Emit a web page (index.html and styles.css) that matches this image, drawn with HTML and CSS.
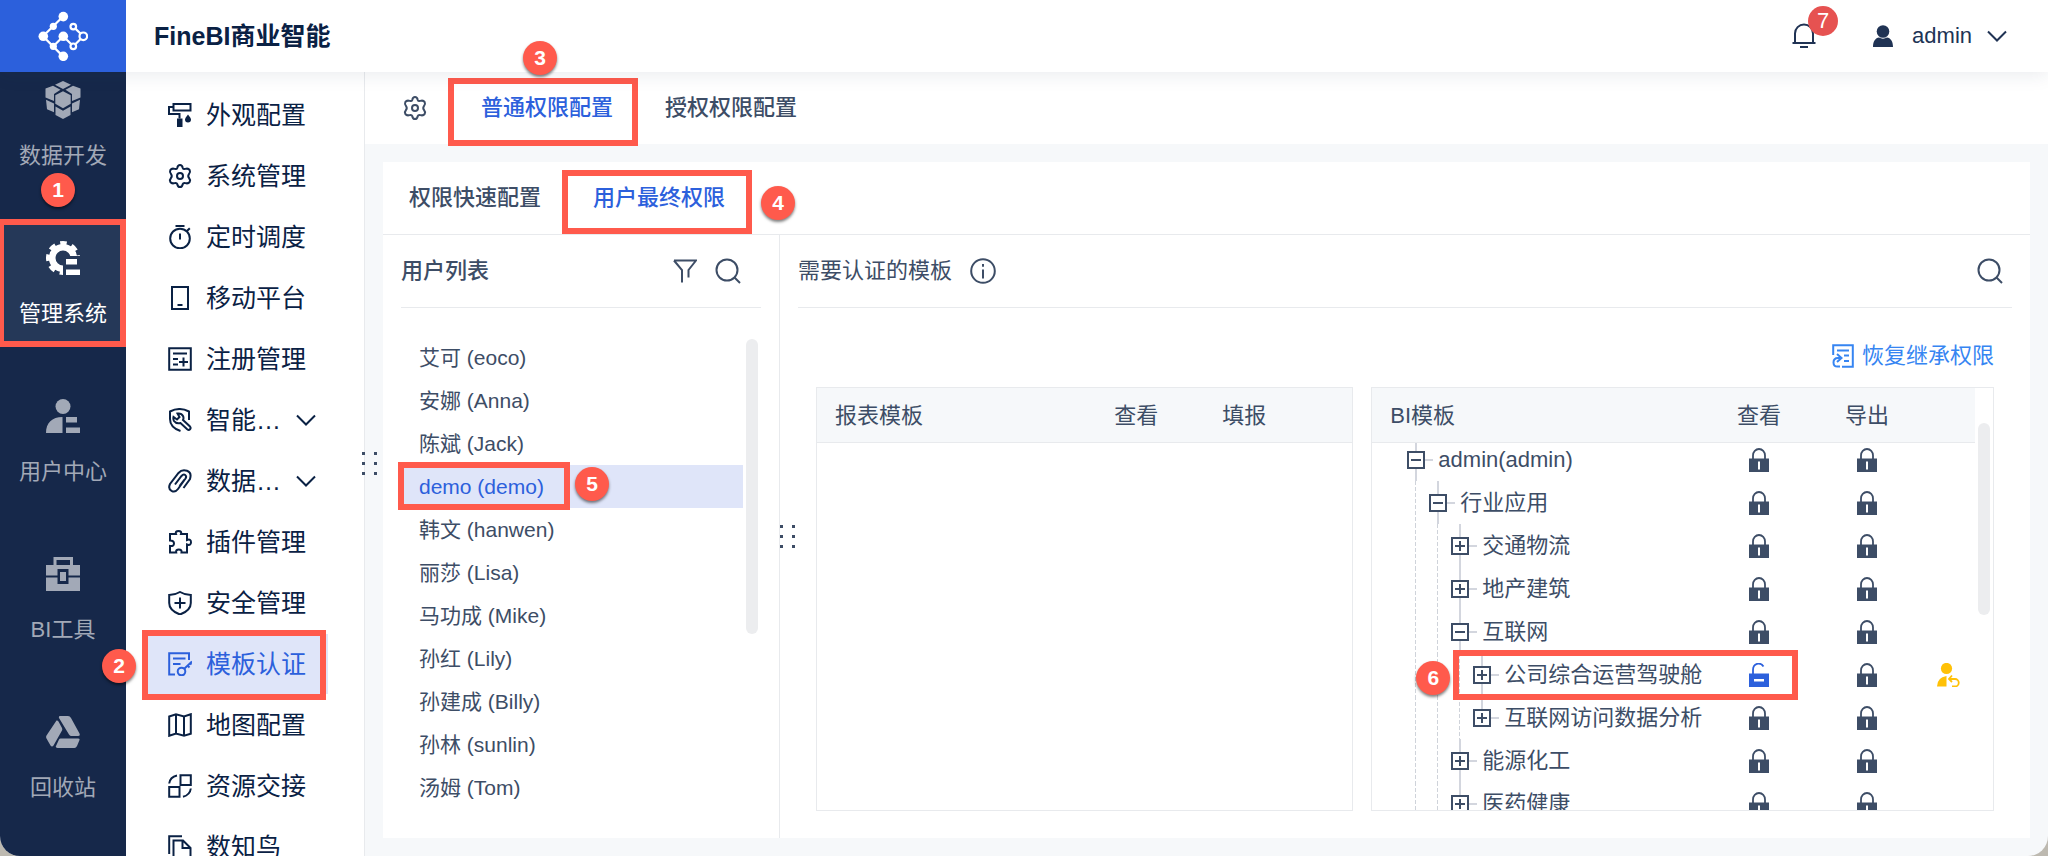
FILE: index.html
```html
<!DOCTYPE html>
<html lang="zh-CN">
<head>
<meta charset="utf-8">
<title>FineBI商业智能</title>
<link rel="stylesheet" href="styles.css">
</head>
<body>
<svg class="sprite" aria-hidden="true">
  <symbol id="gear" viewBox="0 0 24 24"><path d="M9.300 3.800Q9.800 1 12 1t2.700 2.800q.600 1.600 2.600 1.100 3-.900 4.400 1.200 1 2-.700 3.900-1.500 2 0 4 1.700 1.900.700 3.900-1.400 2.100-4.400 1.200-2-.500-2.600 1.100Q14.200 23 12 23t-2.700-2.800q-.600-1.600-2.600-1.100-3 .900-4.400-1.200-1-2 .700-3.900 1.500-2 0-4-1.700-1.900-.700-3.900 1.400-2.100 4.400-1.200 2 .500 2.600-1.100z"/><circle cx="12" cy="12" r="3"/></symbol>
  <symbol id="chevron" viewBox="0 0 20 12"><path d="M1 1.500 10 10.500 19 1.500"/></symbol>
  <symbol id="search" viewBox="0 0 26 26"><circle cx="12" cy="12" r="10.500"/><path d="M19 19l6 6"/></symbol>
  <symbol id="lock" viewBox="0 0 20 24"><path d="M4 11V7.500a6 6.500 0 0 1 12 0V11" fill="none" stroke="currentColor" stroke-width="1.800"/><path fill="currentColor" d="M0 10.500h20V24H0z"/><path fill="#fff" d="M9 13.500h2v8H9z"/></symbol>
  <symbol id="unlock" viewBox="0 0 20 24"><path d="M4 11V7C4 .500 11-1.500 14.500 3.500" fill="none" stroke="currentColor" stroke-width="1.800"/><path fill="currentColor" d="M0 10.500h20V24H0z"/><path fill="#fff" d="M5 16h10v2.500H5z"/></symbol>
</svg>

<div class="app">
  <header class="header">
    <a class="logo" href="#" aria-label="FineBI">
      <svg viewBox="0 0 50 50" width="50" height="50" fill="none" stroke="#fff" stroke-width="2.200">
        <path d="M25.300 5.300 5 25.300 25.300 45.600M15.300 35.300l10-10 10 10M35.300 15.600l10 9.700-10 10"/>
        <g fill="#fff" stroke="none"><circle cx="25.300" cy="5.600" r="4.800"/><circle cx="15.300" cy="15.300" r="3.600"/><circle cx="5.300" cy="25.300" r="4.800"/><circle cx="25.300" cy="25.300" r="4.800"/><circle cx="15.300" cy="35.300" r="3.600"/><circle cx="25.300" cy="45.300" r="4.800"/></g>
        <g fill="#2c60dc"><circle cx="35.300" cy="15.600" r="2.800"/><circle cx="45.300" cy="25.300" r="3.800"/><circle cx="35.300" cy="35.300" r="2.800"/></g>
      </svg>
    </a>
    <h1 class="brand">FineBI商业智能</h1>
    <button class="bell" type="button" aria-label="消息">
      <svg viewBox="0 0 24 26" width="24" height="26" fill="none" stroke="currentColor" stroke-width="2"><path d="M3 20V10.500a9 9 0 0 1 18 0V20M.500 20h23M8 24h8"/></svg>
      <span class="count">7</span>
    </button>
    <button class="account" type="button">
      <svg viewBox="0 0 20 22" width="20" height="22" fill="currentColor"><circle cx="10" cy="6.500" r="6.300"/><path d="M0 22c0-6 2.500-9 6-9.500 2.500 1.500 5.500 1.500 8 0 3.500.5 6 3.500 6 9.500z"/></svg>
      <span>admin</span>
      <svg class="line" width="20" height="12"><use href="#chevron"/></svg>
    </button>
  </header>

  <div class="shell">
    <nav class="rail">
      <a class="rail-item" href="#">
        <svg viewBox="0 0 36 38" width="36" height="38" fill="currentColor"><path d="M18 0l8 3.800-8 4.200-8-4.200zM.500 7.500 8 4.800l7.500 3.900-6.500 4.200v7L.500 16.500zM35.500 7.500 28 4.800l-7.500 3.900 6.500 4.200v7l8.500-3.400zM18 10.300l7.700 4v8.500L18 27.300l-7.700-4.500v-8.500zM1 18.800l8 3.700v8.800l-7-3zM35 18.800l-8 3.700v8.800l7-3zM10.500 25.500l7.500 4.300 7.500-4.300V34L18 38l-7.500-4z"/></svg>
        <span>数据开发</span>
        <b class="badge badge-rail">1</b>
      </a>
      <a class="rail-item active" href="#">
        <svg viewBox="0 0 34 34" width="34" height="34" fill="none" stroke="currentColor"><clipPath id="cut"><path d="M0 0h34v15H17v19H0z"/></clipPath><g clip-path="url(#cut)"><circle cx="17" cy="17" r="10.800" stroke-width="6.600"/><circle cx="17" cy="17" r="15" stroke-width="4" stroke-dasharray="6.500 5.280" stroke-dashoffset="3.250"/></g><path fill="currentColor" stroke="none" d="M20 18h11v5.500H20zM20 28.500h14V34H20z"/></svg>
        <span>管理系统</span>
        <i class="frame frame-rail"></i>
      </a>
      <a class="rail-item" href="#">
        <svg viewBox="0 0 34 34" width="34" height="34" fill="currentColor"><circle cx="17" cy="7.500" r="7.500"/><path d="M0 34C0 24 6 18 16.500 18v16zM20 18h11v5.500H20zM20 28.500h14V34H20z"/></svg>
        <span>用户中心</span>
      </a>
      <a class="rail-item" href="#">
        <svg viewBox="0 0 34 34" width="34" height="34" fill="currentColor"><path fill-rule="evenodd" d="M7.500 8V0H27v8h7v10.500H22.500V12h-11v6.500H0V8zm3 0H24V3H10.500zM0 20.500h11.500V27h11v-6.500H34V34H0zM14 15h6v9h-6z"/></svg>
        <span>BI工具</span>
      </a>
      <a class="rail-item" href="#">
        <svg viewBox="0 0 34 34" width="34" height="34" fill="currentColor"><path d="M14 1h8q2 0 3 2l8.500 15.500q1 2.500-1.500 2.500h-6.500q-1.500 0-2.500-1.500L13 3q-.5-2 1-2zM10.500 5.500q1-.5 2 1L16 13q.5 1.500 0 2.500L7.500 30.500q-1.500 2-3 0L.500 23.500q-.800-1.500 0-3zM14.500 23.500H32q2 0 1.500 1.500L31 31q-1 2-2.500 2H11.500q-2.500-.5-1.500-2l3-6.500q.5-1 1.500-1z"/></svg>
        <span>回收站</span>
      </a>
    </nav>

    <nav class="menu">
      <a class="menu-item" href="#"><svg viewBox="0 0 24 24"><path d="M5.500 1H22.500v6.500h-17zM5.500 4H1v7h10.500v4.500"/><path d="M9 15.500h5.500V24H9zM20 11.500q3 3.500 3 5a3 3 0 0 1-6 0q0-1.500 3-5z" fill="currentColor" stroke="none"/></svg><span>外观配置</span></a>
      <a class="menu-item" href="#"><svg><use href="#gear"/></svg><span>系统管理</span></a>
      <a class="menu-item" href="#"><svg viewBox="0 0 24 24"><circle cx="12" cy="13.500" r="9.800"/><path d="M7.500 1h9M12 8.500v6M19 6l2.800-2.800"/></svg><span>定时调度</span></a>
      <a class="menu-item" href="#"><svg viewBox="0 0 24 24"><path d="M4 1h16v22H4zM9.500 19h5"/></svg><span>移动平台</span></a>
      <a class="menu-item" href="#"><svg viewBox="0 0 24 24"><path d="M1.200 1.200h21.600v21.600H1.200zM5 6.500h14M5 12h5M5 17.500h5M11 15h9M15.500 10.500v9"/></svg><span>注册管理</span></a>
      <a class="menu-item" href="#"><svg viewBox="0 0 24 24"><path d="M21 12V3.500Q11.500-1.500 2 3.500V11q0 8.500 10.500 12M9.500 5.500q4-.500 5.500 2.500 1 2 0 4l7 6.500q1.200 1.500 0 2.800t-2.800 0L12.500 15q-4.500 1-6.500-2-1-2-.500-4l3.500 2.500 2.500-2.500z"/></svg><span>智能…</span><svg class="more"><use href="#chevron"/></svg></a>
      <a class="menu-item" href="#"><svg viewBox="0 0 24 24"><path d="M7 15.500 13.500 7q2-2.300 3.700-1t.300 3.500L10 20q-2.800 3.800-6.500 1.800T2 15L10.500 4Q14 0 19 1.800t3 8.200L15.500 19M11.500 17l5-6.500"/></svg><span>数据…</span><svg class="more"><use href="#chevron"/></svg></a>
      <a class="menu-item" href="#"><svg viewBox="0 0 24 24"><path d="M2 4H8Q7 1 10.500 1T13 4h6v6q4-1.500 4 2.200T19 14.500V22.500h-5.500q.5-3-2.700-3t-2.600 3H2V16q4 .500 4-2.500T2 10.500z"/></svg><span>插件管理</span></a>
      <a class="menu-item" href="#"><svg viewBox="0 0 24 24"><path d="M12 1q5 3 10.800 3v8q0 7.500-10.800 11.500Q1.200 19.500 1.200 12V4Q7 4 12 1zM12 6.500v11M6.500 12h11"/></svg><span>安全管理</span></a>
      <a class="menu-item active" href="#"><svg viewBox="0 0 24 24"><path d="M7 22.500H1.200V1.200H21V8M5 6.500h12.500M5 12h7.500M16.500 16.500 24 9.500M19.500 13.500l2 2M22 11l1.500 1.500"/><circle cx="13.500" cy="19.500" r="3.800"/></svg><span>模板认证</span><i class="frame frame-menu"></i><b class="badge badge-menu">2</b></a>
      <a class="menu-item" href="#"><svg viewBox="0 0 24 24"><path d="M1.200 3.500 8 1.200l8 2.300 6.800-2.300v19.500L16 22.800l-8-2.300-6.800 2.300zM8 1.200v19.300M16 3.500v19.300"/></svg><span>地图配置</span></a>
      <a class="menu-item" href="#"><svg viewBox="0 0 24 24"><path d="M12.500 1.200h10.300V11H12.500zM1.200 13h10.300v9.800H1.200zM1.200 9.500Q2 3 9 1.500M22.800 14.500Q22 21 15 22.800"/></svg><span>资源交接</span></a>
      <a class="menu-item" href="#"><svg viewBox="0 0 24 24"><path d="M1.200 19V1.200H14M5.500 23.500V5.500H15l7.500 7.500v10.500M14.500 5.500V13h8"/></svg><span>数知鸟</span></a>
      <span class="grip grip-menu"></span>
    </nav>

    <main class="content">
      <div class="topbar">
        <button class="gear" type="button" aria-label="设置"><svg width="24" height="24"><use href="#gear"/></svg></button>
        <button class="tab active" type="button">普通权限配置<i class="frame frame-top"></i><b class="badge badge-top">3</b></button>
        <button class="tab" type="button">授权权限配置</button>
      </div>

      <div class="panel">
        <div class="subtabs">
          <button class="tab" type="button">权限快速配置</button>
          <button class="tab active" type="button">用户最终权限<i class="frame frame-sub"></i><b class="badge badge-sub">4</b></button>
        </div>
        <div class="columns">
          <section class="users">
            <div class="head">
              <h2>用户列表</h2>
              <button type="button" aria-label="筛选"><svg viewBox="0 0 24 24" width="24" height="24"><path d="M1 1.500h22L15.500 11v7.500M1 1.500 9 11v12.500"/></svg></button>
              <button type="button" aria-label="搜索"><svg width="26" height="26"><use href="#search"/></svg></button>
            </div>
            <div class="users-body">
              <ul class="list">
                <li>艾可 (eoco)</li>
                <li>安娜 (Anna)</li>
                <li>陈斌 (Jack)</li>
                <li class="active">demo (demo)<i class="frame frame-user"></i><b class="badge badge-user">5</b></li>
                <li>韩文 (hanwen)</li>
                <li>丽莎 (Lisa)</li>
                <li>马功成 (Mike)</li>
                <li>孙红 (Lily)</li>
                <li>孙建成 (Billy)</li>
                <li>孙林 (sunlin)</li>
                <li>汤姆 (Tom)</li>
              </ul>
              <div class="thumb"></div>
            </div>
            <span class="grip grip-users"></span>
          </section>

          <section class="templates">
            <div class="head">
              <h2 class="regular">需要认证的模板</h2>
              <svg width="26" height="26" viewBox="0 0 26 26"><circle cx="13" cy="13" r="11.800"/><path d="M13 11.500v9M13 6v2.800"/></svg>
              <button class="push" type="button" aria-label="搜索"><svg width="26" height="26"><use href="#search"/></svg></button>
            </div>
            <div class="restore-row">
              <button class="restore" type="button">
                <svg width="22" height="24" viewBox="0 0 22 24"><path d="M1.200 11V1.200h19.600v21.600H10M5 6.500h12M12 11.500h5M12 17h5M5 10l4.500 4L5 18M9 14H6q-4.500 0-4.500 4.500T6 22.500h2"/></svg>
                恢复继承权限
              </button>
            </div>
            <div class="tables">
              <div class="box report">
                <table>
                  <thead><tr><th>报表模板</th><th>查看</th><th>填报</th><th></th></tr></thead>
                </table>
              </div>
              <div class="box bi">
                <table>
                  <thead><tr><th>BI模板</th><th>查看</th><th>导出</th><th></th></tr></thead>
                  <tbody>
                    <tr><td><span class="node"><button class="minus" type="button" aria-label="收起"></button></span>admin(admin)</td><td><svg><use href="#lock"/></svg></td><td><svg><use href="#lock"/></svg></td><td></td></tr>
                    <tr><td><span class="guide"></span><span class="node"><button class="minus" type="button" aria-label="收起"></button></span>行业应用</td><td><svg><use href="#lock"/></svg></td><td><svg><use href="#lock"/></svg></td><td></td></tr>
                    <tr><td><span class="guide"></span><span class="guide"></span><span class="node"><button class="plus" type="button" aria-label="展开"></button></span>交通物流</td><td><svg><use href="#lock"/></svg></td><td><svg><use href="#lock"/></svg></td><td></td></tr>
                    <tr><td><span class="guide"></span><span class="guide"></span><span class="node"><button class="plus" type="button" aria-label="展开"></button></span>地产建筑</td><td><svg><use href="#lock"/></svg></td><td><svg><use href="#lock"/></svg></td><td></td></tr>
                    <tr><td><span class="guide"></span><span class="guide"></span><span class="node"><button class="minus" type="button" aria-label="收起"></button></span>互联网</td><td><svg><use href="#lock"/></svg></td><td><svg><use href="#lock"/></svg></td><td></td></tr>
                    <tr><td><span class="guide"></span><span class="guide"></span><span class="guide"></span><span class="node"><button class="plus" type="button" aria-label="展开"></button></span>公司综合运营驾驶舱<i class="frame frame-row"></i><b class="badge badge-row">6</b></td><td><svg class="open"><use href="#unlock"/></svg></td><td><svg><use href="#lock"/></svg></td><td><svg class="person" viewBox="0 0 24 24"><circle cx="10.500" cy="5.500" r="5.600" fill="currentColor"/><path d="M1 23.500q0-9 9.500-10.500v10.500z" fill="currentColor"/><path d="M13.500 16H19a3.500 3.500 0 0 1 0 7.500h-3M16 12.500 13 16l3 3" fill="none" stroke="currentColor" stroke-width="1.800"/></svg></td></tr>
                    <tr><td><span class="guide"></span><span class="guide"></span><span class="guide"></span><span class="node last"><button class="plus" type="button" aria-label="展开"></button></span>互联网访问数据分析</td><td><svg><use href="#lock"/></svg></td><td><svg><use href="#lock"/></svg></td><td></td></tr>
                    <tr><td><span class="guide"></span><span class="guide"></span><span class="node"><button class="plus" type="button" aria-label="展开"></button></span>能源化工</td><td><svg><use href="#lock"/></svg></td><td><svg><use href="#lock"/></svg></td><td></td></tr>
                    <tr><td><span class="guide"></span><span class="guide"></span><span class="node"><button class="plus" type="button" aria-label="展开"></button></span>医药健康</td><td><svg><use href="#lock"/></svg></td><td><svg><use href="#lock"/></svg></td><td></td></tr>
                  </tbody>
                </table>
                <div class="thumb"></div>
              </div>
            </div>
          </section>
        </div>
      </div>
    </main>
  </div>
</div>
</body>
</html>
```
FILE: styles.css
```css
* { box-sizing: border-box; }

body {
  margin: 0;
  background: #bdb9b0;
  color: #3d4d66;
  font: 22px/30px "Liberation Sans", "Noto Sans CJK SC", sans-serif;
}

button {
  margin: 0;
  padding: 0;
  border: 0;
  background: none;
  color: inherit;
  font: inherit;
}

a { color: inherit; text-decoration: none; }
h1, h2 { margin: 0; }
svg { display: block; flex: none; }
.sprite { position: absolute; width: 0; height: 0; }

.app {
  display: flex;
  flex-direction: column;
  height: 100vh;
  overflow: hidden;
  border-radius: 0 0 20px 20px;
  background: #f6f8fa;
}

/* Header */
.header {
  position: relative;
  z-index: 2;
  display: flex;
  flex: none;
  align-items: center;
  height: 72px;
  padding-right: 41px;
  background: #fff;
  box-shadow: 0 2px 18px rgba(30, 50, 80, .1);
  color: #203354;
}

.logo {
  display: flex;
  align-items: center;
  justify-content: center;
  width: 126px;
  height: 72px;
  background: #2c60dc;
}

.brand {
  flex: 1;
  padding-left: 28px;
  color: #0a2144;
  font-size: 25px;
}

.bell { position: relative; margin-right: 57px; }

.count {
  position: absolute;
  top: -17px;
  left: 16px;
  width: 30px;
  height: 30px;
  border-radius: 50%;
  background: #e65251;
  color: #fff;
  line-height: 30px;
  text-align: center;
}

.account { display: flex; align-items: center; }
.account span { margin: 0 15px 0 19px; }
.line { fill: none; stroke: currentColor; stroke-width: 2; }

.shell { display: flex; flex: 1; min-height: 0; }

/* Module rail */
.rail {
  display: flex;
  flex: none;
  flex-direction: column;
  gap: 32px;
  width: 126px;
  background: #16284a;
  color: #a2a9b7;
}

.rail-item {
  position: relative;
  display: flex;
  flex: none;
  flex-direction: column;
  align-items: center;
  justify-content: space-between;
  height: 126px;
  padding: 21px 0 17px;
}

.rail-item:first-child { margin-top: -10px; padding-top: 19px; }
.rail-item.active { background: #253858; color: #fff; }

/* System menu */
.menu {
  position: relative;
  display: flex;
  flex: none;
  flex-direction: column;
  gap: 1px;
  width: 239px;
  padding: 13px 36px 0 20px;
  border-right: 1px solid #e8eaed;
  background: #fff;
  color: #0a2144;
  font-size: 25px;
}

.menu-item {
  position: relative;
  display: flex;
  flex: none;
  align-items: center;
  height: 60px;
  padding-left: 22px;
}

.menu-item svg {
  width: 24px;
  height: 24px;
  fill: none;
  stroke: currentColor;
  stroke-width: 2;
}

.menu-item span { margin-left: 14px; }
.menu-item .more { width: 20px; height: 12px; margin: 0 12px 0 auto; }
.menu-item.active { background: #dfe5f9; color: #2c60dc; }

/* Content */
.content { flex: 1; display: flex; flex-direction: column; min-width: 0; }

.topbar {
  display: flex;
  flex: none;
  align-items: center;
  height: 72px;
  padding-left: 38px;
  background: #fff;
}

.gear svg, .head svg {
  fill: none;
  stroke: currentColor;
  stroke-width: 2;
}

.gear { margin-right: 28px; }

.tab {
  position: relative;
  height: 72px;
  padding: 0 26px;
  font-weight: 500;
  line-height: 72px;
}

.tab.active { color: #2c60dc; }

.panel {
  display: flex;
  flex: 1;
  flex-direction: column;
  min-height: 0;
  margin: 18px;
  background: #fff;
}

.subtabs { display: flex; flex: none; height: 73px; border-bottom: 1px solid #e8eaed; }
.columns { display: flex; flex: 1; min-height: 0; }

.head {
  display: flex;
  flex: none;
  align-items: center;
  gap: 18px;
  height: 73px;
  margin: 0 18px;
  border-bottom: 1px solid #e8eaed;
}

.head h2 { font-size: 22px; font-weight: 500; }
.head h2.regular { font-weight: 400; }
.head .push { margin: 0 9px 0 auto; }

.users {
  position: relative;
  flex: none;
  width: 397px;
  border-right: 1px solid #e8eaed;
}

.users .head { padding-right: 20px; }
.users .head h2 { flex: 1; }
.users-body { display: flex; gap: 3px; padding: 28px 21px 0 18px; }

.list { flex: 1; margin: 0; padding: 0; font-size: 21px; list-style: none; }

.list li {
  position: relative;
  height: 43px;
  padding-left: 18px;
  line-height: 43px;
}

.list .active { background: #dfe5f9; color: #2c60dc; }

.thumb { width: 12px; border-radius: 6px; background: #ecedef; }
.users .thumb { height: 295px; margin-top: 3px; }

.templates { display: flex; flex: 1; flex-direction: column; min-width: 0; }

.restore-row {
  display: flex;
  flex: none;
  justify-content: flex-end;
  height: 79px;
  padding: 18px 36px 0;
}

.restore {
  display: flex;
  align-items: center;
  gap: 8px;
  height: 60px;
  color: #3685f2;
}

.restore svg { fill: none; stroke: currentColor; stroke-width: 2; }

.tables {
  display: flex;
  flex: 1;
  gap: 18px;
  min-height: 0;
  padding: 0 36px 27px;
}

.box { display: flex; min-width: 0; border: 1px solid #e8eaed; }
.report { flex: 13 1 0; }
.bi { flex: 15 1 0; gap: 3px; padding-right: 3px; }
.bi .thumb { flex: none; height: 192px; margin-top: 35px; }

table { display: flex; flex: 1; flex-direction: column; min-height: 0; }
thead { display: block; flex: none; border-bottom: 1px solid #e8eaed; background: #f6f8fa; }
tbody { display: block; flex: 1; min-height: 0; overflow: hidden; }
tr { position: relative; display: grid; grid-template-columns: 1fr 108px 108px 54px; }
th { height: 54px; padding: 0; font-weight: 400; line-height: 56px; }
th:first-child { padding-left: 18px; text-align: left; }
tbody tr:first-child { margin-top: -5px; }

td {
  display: flex;
  align-items: center;
  justify-content: center;
  height: 43px;
  padding: 0;
}

td:first-child { justify-content: flex-start; padding-left: 35px; white-space: nowrap; }
td svg { width: 20px; height: 24px; }
td .open { color: #2c60dc; }
td .person { width: 24px; color: #ffc107; }

/* Tree lines */
.guide {
  align-self: stretch;
  flex: none;
  width: 22px;
  background: repeating-linear-gradient(#cfd3da 0 4px, transparent 4px 6px) 8px 0 / 1px 100% no-repeat;
}

.node {
  display: flex;
  flex: none;
  align-items: center;
  align-self: stretch;
  width: 31px;
  background:
    linear-gradient(#d3d6de, #d3d6de) 8px 0 / 2px 100% no-repeat,
    linear-gradient(#d3d6de, #d3d6de) 18px 50% / 8px 2px no-repeat;
}

.node.last {
  background:
    linear-gradient(#d3d6de, #d3d6de) 8px 0 / 2px 50% no-repeat,
    linear-gradient(#d3d6de, #d3d6de) 18px 50% / 8px 2px no-repeat;
}

.minus, .plus {
  width: 18px;
  height: 18px;
  border: 2px solid #3d4d66;
  background: linear-gradient(#3d4d66, #3d4d66) center / 10px 2px no-repeat #fff;
}

.plus {
  background:
    linear-gradient(#3d4d66, #3d4d66) center / 10px 2px no-repeat,
    linear-gradient(#3d4d66, #3d4d66) center / 2px 10px no-repeat #fff;
}

/* Drag handles */
.grip {
  position: absolute;
  z-index: 1;
  width: 15px;
  height: 23px;
  background:
    repeating-linear-gradient(#3d4d66 0 3px, transparent 3px 10px) 0 0 / 3px 23px no-repeat,
    repeating-linear-gradient(#3d4d66 0 3px, transparent 3px 10px) 12px 0 / 3px 23px no-repeat;
}

.grip-menu { right: -13px; bottom: 381px; }
.grip-users { right: -16px; top: 290px; }

/* Step markers */
.frame {
  position: absolute;
  z-index: 1;
  border: 6px solid #ff5a4c;
  pointer-events: none;
}

.badge {
  position: absolute;
  z-index: 3;
  width: 34px;
  height: 34px;
  border-radius: 50%;
  background: #ff5a4c;
  box-shadow: 0 2px 3px rgba(0, 0, 0, .5);
  color: #fff;
  font-size: 21px;
  font-weight: 700;
  line-height: 34px;
  text-align: center;
}

.frame-rail { inset: -1px 0 -1px -2px; }
.badge-rail { top: 111px; left: 41px; }
.frame-menu { inset: -4px 2px -6px -4px; }
.badge-menu { top: 15px; left: -44px; }
.frame-top { inset: 6px 1px -2px -7px; }
.badge-top { top: -31px; left: 68px; }
.frame-sub { inset: 8px -1px 0 -5px; }
.badge-sub { top: 24px; right: -44px; }
.frame-user { inset: -3px 173px -2px -3px; }
.badge-user { top: 2px; left: 174px; }
.frame-row { inset: -3px 177px -4px 81px; }
.badge-row { top: 8px; left: 44px; }
```
